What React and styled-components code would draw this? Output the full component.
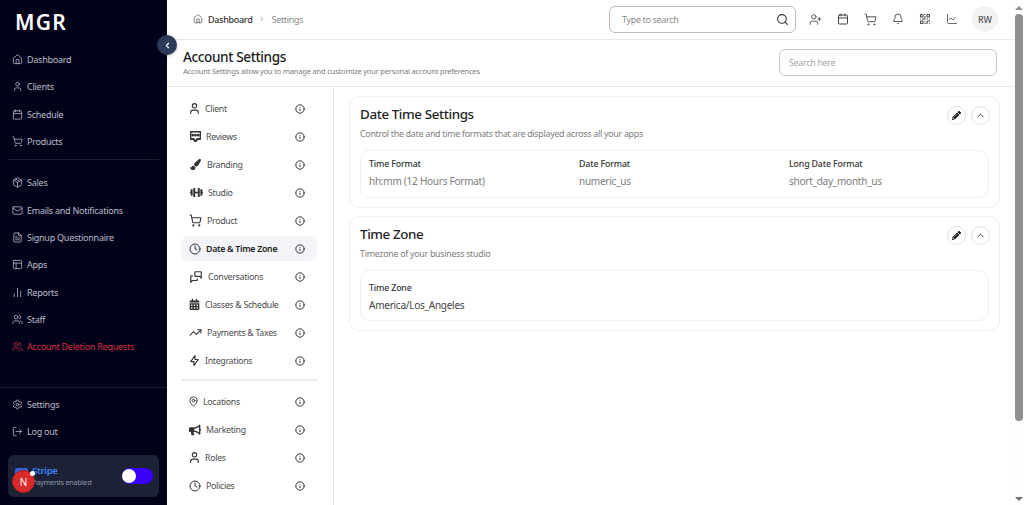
import React from 'react';
import styled, { createGlobalStyle } from 'styled-components';
import {
	House,
	User,
	Calendar,
	ShoppingCart,
	Package,
	Mail,
	FileText,
	PanelsTopLeft,
	ChartNoAxesColumn,
	Users,
	Settings,
	LogOut,
	ChevronLeft,
	ChevronRight,
	ChevronUp,
	Search,
	UserPlus,
	Bell,
	QrCode,
	ChartLine,
	Info,
	Clock,
	MapPin,
	TrendingUp,
} from 'lucide-react';
import { FaPencilAlt, FaPaintBrush, FaDumbbell, FaCalendarAlt, FaBullhorn } from 'react-icons/fa';
import { BsChatSquareDots } from 'react-icons/bs';
import { TbMessages, TbBolt } from 'react-icons/tb';

const GlobalStyle = createGlobalStyle`
	html, body {
		margin: 0;
		height: 100%;
		overflow: hidden;
		background: #fff;
	}
	* {
		box-sizing: border-box;
	}
	body {
		font-family: "Noto Sans", "Open Sans", sans-serif;
	}
`;

const mainNav = [
	{ label: 'Dashboard', icon: House },
	{ label: 'Clients', icon: User },
	{ label: 'Schedule', icon: Calendar },
	{ label: 'Products', icon: ShoppingCart },
];

const secondNav = [
	{ label: 'Sales', icon: Package },
	{ label: 'Emails and Notifications', icon: Mail },
	{ label: 'Signup Questionnaire', icon: FileText },
	{ label: 'Apps', icon: PanelsTopLeft },
	{ label: 'Reports', icon: ChartNoAxesColumn },
	{ label: 'Staff', icon: Users },
	{ label: 'Account Deletion Requests', icon: Users, danger: true },
];

const footerNav = [
	{ label: 'Settings', icon: Settings },
	{ label: 'Log out', icon: LogOut },
];

const settingsTop = [
	{ label: 'Client', icon: User, width: 11, size: 13 },
	{ label: 'Reviews', icon: BsChatSquareDots, width: 12, size: 11 },
	{ label: 'Branding', icon: FaPaintBrush, width: 13, size: 11 },
	{ label: 'Studio', icon: FaDumbbell, width: 14, size: 13 },
	{ label: 'Product', icon: ShoppingCart, width: 13, size: 13 },
	{ label: 'Date & Time Zone', icon: Clock, width: 12, size: 12, active: true },
	{ label: 'Conversations', icon: TbMessages, width: 14, size: 14 },
	{ label: 'Classes & Schedule', icon: FaCalendarAlt, width: 11, size: 11 },
	{ label: 'Payments & Taxes', icon: TrendingUp, width: 13, size: 13 },
	{ label: 'Integrations', icon: TbBolt, width: 11, size: 13 },
];

const settingsBottom = [
	{ label: 'Locations', icon: MapPin, width: 9, size: 11 },
	{ label: 'Marketing', icon: FaBullhorn, width: 12, size: 12 },
	{ label: 'Roles', icon: User, width: 11, size: 13 },
	{ label: 'Policies', icon: Clock, width: 12, size: 12 },
];

const NavRow = ({ item }) => {
	const Icon = item.icon;
	return (
		<NavItem $danger={item.danger}>
			<Icon size={11} strokeWidth={1.7} />
			<span>{item.label}</span>
		</NavItem>
	);
};

const SettingsRow = ({ item }) => {
	const Icon = item.icon;
	return (
		<SettingsItem $active={item.active}>
			<SettingsIcon $width={item.width}>
				<Icon size={item.size} strokeWidth={2} />
			</SettingsIcon>
			<SettingsLabel $active={item.active}>{item.label}</SettingsLabel>
			<Info size={10} strokeWidth={2.4} />
		</SettingsItem>
	);
};

const Field = ({ label, value, dark }) => (
	<FieldBox>
		<FieldLabel>{label}</FieldLabel>
		<FieldValue $dark={dark}>{value}</FieldValue>
	</FieldBox>
);

const CardActions = () => (
	<Actions>
		<RoundButton>
			<FaPencilAlt size={9} color="#111" />
		</RoundButton>
		<RoundButton>
			<ChevronUp size={11} color="#333" />
		</RoundButton>
	</Actions>
);

const App = () => (
	<Page>
		<GlobalStyle />
		<Sidebar>
			<Logo>MGR</Logo>
			<NavGroup>
				{mainNav.map((item) => (
					<NavRow item={item} key={item.label} />
				))}
			</NavGroup>
			<SideDivider />
			<NavGroup>
				{secondNav.map((item) => (
					<NavRow item={item} key={item.label} />
				))}
			</NavGroup>
			<SideFooter>
				<NavGroup>
					{footerNav.map((item) => (
						<NavRow item={item} key={item.label} />
					))}
				</NavGroup>
				<StripeCard>
					<StripeLogo />
					<StripeText>
						<StripeName>Stripe</StripeName>
						<StripeSub>Payments enabled</StripeSub>
					</StripeText>
					<Toggle />
					<DevBadge>N</DevBadge>
					<DevDot />
				</StripeCard>
			</SideFooter>
		</Sidebar>
		<CollapseButton>
			<ChevronLeft size={9} strokeWidth={3} color="#fff" />
		</CollapseButton>
		<Main>
			<TopBar>
				<Crumbs>
					<House size={10} color="#666" />
					<CrumbLink>Dashboard</CrumbLink>
					<ChevronRight size={8} color="#888" />
					<CrumbCurrent>Settings</CrumbCurrent>
				</Crumbs>
				<TopSearch>
					<span>Type to search</span>
					<Search size={13} color="#333" />
				</TopSearch>
				<TopIcons>
					<UserPlus size={13} strokeWidth={1.6} />
					<Calendar size={12} strokeWidth={2} />
					<ShoppingCart size={13} strokeWidth={1.7} />
					<Bell size={12} strokeWidth={1.8} />
					<QrCode size={12} strokeWidth={2.2} />
					<ChartLine size={12} strokeWidth={1.6} />
				</TopIcons>
				<Avatar>RW</Avatar>
			</TopBar>
			<TitleBar>
				<TitleText>
					<PageTitle>Account Settings</PageTitle>
					<PageSub>
						Account Settings allow you to manage and customize your personal account preferences
					</PageSub>
				</TitleText>
				<TitleSearch>Search here</TitleSearch>
			</TitleBar>
			<Body>
				<SettingsNav>
					<SettingsGroup>
						{settingsTop.map((item) => (
							<SettingsRow item={item} key={item.label} />
						))}
					</SettingsGroup>
					<SettingsDivider />
					<SettingsGroup>
						{settingsBottom.map((item) => (
							<SettingsRow item={item} key={item.label} />
						))}
					</SettingsGroup>
				</SettingsNav>
				<Content>
					<Card>
						<CardHead>
							<div>
								<CardTitle>Date Time Settings</CardTitle>
								<CardSub>Control the date and time formats that are displayed across all your apps</CardSub>
							</div>
							<CardActions />
						</CardHead>
						<FieldGrid>
							<Field label="Time Format" value="hh:mm (12 Hours Format)" />
							<Field label="Date Format" value="numeric_us" />
							<Field label="Long Date Format" value="short_day_month_us" />
						</FieldGrid>
					</Card>
					<Card>
						<CardHead>
							<div>
								<CardTitle>Time Zone</CardTitle>
								<CardSub>Timezone of your business studio</CardSub>
							</div>
							<CardActions />
						</CardHead>
						<FieldGrid $tall>
							<Field label="Time Zone" value="America/Los_Angeles" dark />
						</FieldGrid>
					</Card>
				</Content>
			</Body>
		</Main>
		<ScrollRail>
			<ScrollArrow $up />
			<ScrollThumb />
			<ScrollArrow />
		</ScrollRail>
	</Page>
);

const Page = styled.div`
	position: relative;
	display: flex;
	width: 1024px;
	height: 505px;
	overflow: hidden;
	color: #222;
`;

const Sidebar = styled.aside`
	width: 167px;
	flex-shrink: 0;
	display: flex;
	flex-direction: column;
	background: #02021a;
	color: #b9bdc9;
	padding-top: 9px;
`;

const Logo = styled.div`
	height: 27px;
	padding-left: 15px;
	font-size: 21px;
	line-height: 27px;
	font-weight: 600;
	letter-spacing: 1.2px;
	color: #fff;
	margin-bottom: 10px;
`;

const NavGroup = styled.nav`
	display: flex;
	flex-direction: column;
`;

const NavItem = styled.div`
	height: 27.3px;
	display: flex;
	align-items: center;
	gap: 4px;
	padding-left: 12px;
	font-size: 9px;
	letter-spacing: -0.25px;
	color: ${(props) => (props.$danger ? '#d9303f' : '#b9bdc9')};

	svg {
		flex-shrink: 0;
	}
`;

const SideDivider = styled.div`
	height: 1px;
	margin: 4px 8px 9px;
	background: #1a1a33;
`;

const SideFooter = styled.div`
	margin-top: auto;
	border-top: 1px solid #1a1f35;
	padding: 2px 0 8px;
	display: flex;
	flex-direction: column;
	gap: 10px;
`;

const StripeCard = styled.div`
	position: relative;
	height: 42px;
	margin: 0 8px;
	padding: 0 6px 0 7px;
	display: flex;
	align-items: center;
	border-radius: 6px;
	background: #1c2135;
`;

const StripeLogo = styled.div`
	width: 13px;
	height: 17px;
	margin-right: 4px;
	border-radius: 2px;
	background: #3563d6;
`;

const StripeText = styled.div`
	flex: 1;
	display: flex;
	flex-direction: column;
	gap: 1px;
`;

const StripeName = styled.div`
	font-size: 9.5px;
	font-weight: 600;
	line-height: 11px;
	letter-spacing: -0.3px;
	color: #3b82f6;
`;

const StripeSub = styled.div`
	font-size: 7.3px;
	line-height: 10px;
	letter-spacing: -0.25px;
	color: #8f94a6;
`;

const Toggle = styled.div`
	width: 31px;
	height: 16px;
	border-radius: 8px;
	background: #3a00f5;
	position: relative;

	&::after {
		content: '';
		position: absolute;
		left: 0;
		top: 1px;
		width: 14px;
		height: 14px;
		border-radius: 50%;
		background: #fff;
	}
`;

const DevBadge = styled.div`
	position: absolute;
	left: 4px;
	top: 15px;
	width: 23px;
	height: 23px;
	display: flex;
	align-items: center;
	justify-content: center;
	border-radius: 50%;
	background: #d92b2b;
	border: 1px solid #b91c1c;
	font-size: 10px;
	color: #fff;
`;

const DevDot = styled.div`
	position: absolute;
	left: 22px;
	top: 16px;
	width: 5px;
	height: 5px;
	border-radius: 50%;
	background: #fff;
`;

const CollapseButton = styled.div`
	position: absolute;
	left: 157px;
	top: 35px;
	width: 20px;
	height: 20px;
	display: flex;
	align-items: center;
	justify-content: center;
	border-radius: 50%;
	background: #2d3b5b;
	box-shadow: 0 1px 3px rgba(0, 0, 0, 0.25);
`;

const Main = styled.main`
	flex: 1;
	min-width: 0;
	display: flex;
	flex-direction: column;
`;

const TopBar = styled.header`
	height: 40px;
	flex-shrink: 0;
	display: flex;
	align-items: center;
	padding: 0 16px 1px 26px;
	border-bottom: 1px solid #e7e8ec;
`;

const Crumbs = styled.div`
	flex: 1;
	display: flex;
	align-items: center;
	gap: 5px;
	font-size: 9px;
	letter-spacing: -0.3px;
`;

const CrumbLink = styled.span`
	font-weight: 500;
	color: #333;
	margin-right: 1px;
`;

const CrumbCurrent = styled.span`
	color: #8a8a8a;
`;

const TopSearch = styled.div`
	width: 187px;
	height: 27px;
	display: flex;
	align-items: center;
	justify-content: space-between;
	padding: 0 6px 0 12px;
	border: 1px solid #b9bcc6;
	border-radius: 6px;
	font-size: 9px;
	letter-spacing: -0.35px;
	color: #8a8a8a;
`;

const TopIcons = styled.div`
	display: flex;
	align-items: center;
	gap: 15px;
	margin-left: 13px;
	color: #444;
`;

const Avatar = styled.div`
	width: 26px;
	height: 26px;
	margin-left: 14px;
	display: flex;
	align-items: center;
	justify-content: center;
	border-radius: 50%;
	background: #f1f2f4;
	font-size: 9px;
	font-weight: 500;
	color: #555;
`;

const TitleBar = styled.div`
	height: 47px;
	flex-shrink: 0;
	display: flex;
	align-items: center;
	justify-content: space-between;
	padding: 0 17px 2px 16px;
	border-bottom: 1px solid #e7e8ec;
`;

const TitleText = styled.div`
	display: flex;
	flex-direction: column;
`;

const PageTitle = styled.h1`
	margin: 0 0 1px;
	font-size: 13.6px;
	line-height: 17px;
	font-weight: 500;
	letter-spacing: -0.4px;
	color: #1c1c1c;
`;

const PageSub = styled.p`
	margin: 0;
	font-size: 7.5px;
	line-height: 10px;
	letter-spacing: -0.18px;
	color: #7b7b7b;
`;

const TitleSearch = styled.div`
	width: 218px;
	height: 27px;
	display: flex;
	align-items: center;
	padding: 0 9px;
	border: 1px solid #c4c6ce;
	border-radius: 6px;
	font-size: 9px;
	letter-spacing: -0.35px;
	color: #a9a9a9;
`;

const Body = styled.div`
	flex: 1;
	min-height: 0;
	display: flex;
`;

const SettingsNav = styled.nav`
	width: 167px;
	flex-shrink: 0;
	padding: 9px 16px 0 14px;
	border-right: 1px solid #e7e8ec;
`;

const SettingsGroup = styled.div`
	display: flex;
	flex-direction: column;
	gap: 3px;
`;

const SettingsItem = styled.div`
	height: 25px;
	display: flex;
	align-items: center;
	padding: 0 12px 0 8px;
	border-radius: 8px;
	background: ${(props) => (props.$active ? '#f3f4f7' : 'transparent')};
	color: #333;

	svg {
		flex-shrink: 0;
	}
`;

const SettingsIcon = styled.span`
	width: ${(props) => props.$width}px;
	display: flex;
	justify-content: center;
	margin-right: 5px;
`;

const SettingsLabel = styled.span`
	flex: 1;
	font-size: 8.8px;
	letter-spacing: -0.3px;
	font-weight: ${(props) => (props.$active ? 600 : 400)};
	color: ${(props) => (props.$active ? '#222' : '#4b4b4b')};
`;

const SettingsDivider = styled.div`
	height: 2px;
	margin: 6px 0 8px;
	background: #e9eaee;
`;

const Content = styled.section`
	flex: 1;
	min-width: 0;
	padding: 9px 14px 0 15px;
	display: flex;
	flex-direction: column;
	gap: 8px;
`;

const Card = styled.article`
	padding: 8px 10px 9px;
	border: 1px solid #eeeff2;
	border-radius: 10px;
`;

const CardHead = styled.div`
	display: flex;
	justify-content: space-between;
	align-items: flex-start;
	margin-bottom: 10px;
`;

const CardTitle = styled.h2`
	margin: 0 0 5px;
	font-size: 13.4px;
	line-height: 18px;
	font-weight: 500;
	letter-spacing: -0.4px;
	color: #1f1f1f;
`;

const CardSub = styled.p`
	margin: 0;
	font-size: 8.8px;
	line-height: 12px;
	letter-spacing: -0.25px;
	color: #7d7d7d;
`;

const Actions = styled.div`
	display: flex;
	gap: 5px;
	margin: 1px -1px 0 0;
`;

const RoundButton = styled.div`
	width: 19px;
	height: 19px;
	display: flex;
	align-items: center;
	justify-content: center;
	border: 1px solid #dfe1e6;
	border-radius: 50%;
`;

const FieldGrid = styled.div`
	display: grid;
	grid-template-columns: repeat(3, 210px);
	min-height: ${(props) => (props.$tall ? 51 : 48)}px;
	align-items: center;
	padding: ${(props) => (props.$tall ? '2px 8px 0' : '0 8px 3px')};
	border: 1px solid #eeeff2;
	border-radius: 10px;
`;

const FieldBox = styled.div`
	display: flex;
	flex-direction: column;
	gap: 5px;
`;

const FieldLabel = styled.div`
	font-size: 8.8px;
	line-height: 12px;
	font-weight: 500;
	letter-spacing: -0.15px;
	color: #333;
`;

const FieldValue = styled.div`
	font-size: 10px;
	line-height: 13px;
	letter-spacing: -0.25px;
	color: ${(props) => (props.$dark ? '#444' : '#7d7d7d')};
`;

const ScrollRail = styled.div`
	width: 10px;
	flex-shrink: 0;
	display: flex;
	flex-direction: column;
	align-items: center;
	background: #fdfdfd;
`;

const ScrollThumb = styled.div`
	width: 8px;
	height: 407px;
	margin: 0 0 auto;
	border-radius: 4px;
	background: #8f8f8f;
`;

const ScrollArrow = styled.div`
	width: 0;
	height: 0;
	margin: 6px 0 4px;
	border-left: 4px solid transparent;
	border-right: 4px solid transparent;
	${(props) => (props.$up ? 'border-bottom: 4px solid #8f8f8f;' : 'border-top: 4px solid #6f6f6f;')}
`;

export default App;
